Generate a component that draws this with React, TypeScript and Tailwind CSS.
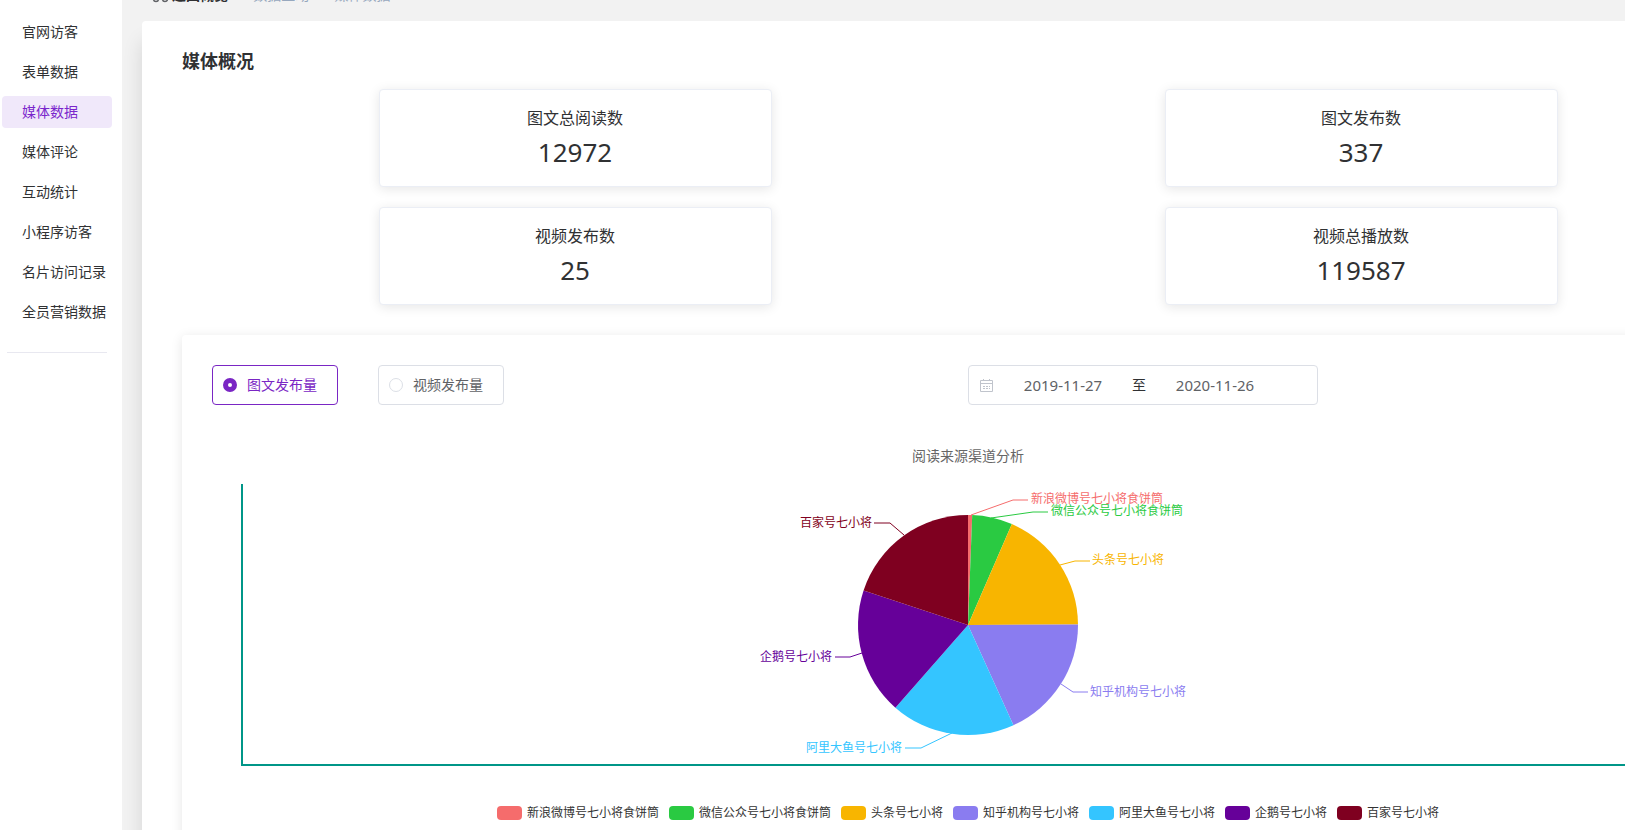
import { useState } from "react";

const menu = [
  "官网访客",
  "表单数据",
  "媒体数据",
  "媒体评论",
  "互动统计",
  "小程序访客",
  "名片访问记录",
  "全员营销数据",
];

const stats = [
  { label: "图文总阅读数", value: "12972" },
  { label: "图文发布数", value: "337" },
  { label: "视频发布数", value: "25" },
  { label: "视频总播放数", value: "119587" },
];

// from / to are degrees, clockwise from the top
const slices = [
  { name: "新浪微博号七小将食饼筒", color: "#f56c6c", from: 0, to: 2.2, line: "253,31 295,16 310,16", x: 313, y: 14 },
  { name: "微信公众号七小将食饼筒", color: "#2aca42", from: 2.2, to: 23.5, line: "273,34 315,28 330,28", x: 333, y: 26 },
  { name: "头条号七小将", color: "#f8b500", from: 23.5, to: 89.7, line: "342,81 357,77 372,77", x: 374, y: 75 },
  { name: "知乎机构号七小将", color: "#8a7cf0", from: 89.7, to: 155.6, line: "343,200 355,208 370,208", x: 372, y: 207 },
  { name: "阿里大鱼号七小将", color: "#34c5ff", from: 155.6, to: 221.3, line: "234,249 203,264 187,264", x: 184, y: 263 },
  { name: "企鹅号七小将", color: "#660099", from: 221.3, to: 288.3, line: "144,169 132,173 117,173", x: 114, y: 172 },
  { name: "百家号七小将", color: "#7f0020", from: 288.3, to: 360, line: "186,51 172,39 156,39", x: 154, y: 38 },
];

const CX = 250;
const CY = 141;
const R = 110;

function arc(from: number, to: number) {
  const point = (deg: number) => {
    const a = (deg * Math.PI) / 180;
    return `${CX + R * Math.sin(a)} ${CY - R * Math.cos(a)}`;
  };
  return `M${CX} ${CY} L${point(from)} A${R} ${R} 0 0 1 ${point(to)} Z`;
}

function Sidebar() {
  return (
    <nav className="w-[122px] shrink-0 bg-white pt-4">
      <ul className="flex flex-col gap-2 pr-[10px] pl-[2px]">
        {menu.map((item) => (
          <li key={item}>
            <a
              href="#"
              className={`block h-8 rounded pl-5 text-sm leading-8 whitespace-nowrap ${
                item === "媒体数据" ? "bg-[#f0e8fa] text-[#7a26cc]" : "text-[#303133]"
              }`}
            >
              {item}
            </a>
          </li>
        ))}
      </ul>
      <hr className="mt-6 mr-[15px] ml-[7px] border-[#e8e8f0]" />
    </nav>
  );
}

function Breadcrumb() {
  return (
    <div className="flex h-5 items-center pl-[10px] text-sm leading-5 whitespace-nowrap text-[#97a8be]">
      <svg className="mr-1 h-4 w-4" viewBox="0 0 16 16" fill="none" stroke="#606266" strokeWidth="1.5">
        <circle cx="4" cy="12" r="2.5" />
        <circle cx="13" cy="12" r="2.5" />
        <path d="M5 10 11 2M12 10 6 2" />
      </svg>
      <a href="#" className="font-bold text-[#303133]">
        返回概览
      </a>
      <span className="mx-[10px]">/</span>
      <span>数据互动</span>
      <span className="mx-[10px]">/</span>
      <span>媒体数据</span>
    </div>
  );
}

function StatCard({ label, value }: { label: string; value: string }) {
  return (
    <div className="w-1/2 rounded border border-[#ebeef5] bg-white py-4 text-center text-[#303133] shadow-[0_2px_12px_rgba(0,0,0,0.1)]">
      <div className="text-base leading-6">{label}</div>
      <div className="mt-1 text-[26px] leading-9">{value}</div>
    </div>
  );
}

function RadioBox({ label, checked, onChange }: { label: string; checked: boolean; onChange: () => void }) {
  return (
    <label
      className={`flex h-10 items-center gap-[10px] rounded border pr-5 pl-[10px] text-sm ${
        checked ? "border-[#7a26c4] text-[#7a26c4]" : "border-[#dcdfe6] text-[#606266]"
      }`}
    >
      <input
        type="radio"
        name="metric"
        checked={checked}
        onChange={onChange}
        className="h-[14px] w-[14px] appearance-none rounded-full border border-[#dcdfe6] bg-white checked:border-[5px] checked:border-[#7a26c4]"
      />
      {label}
    </label>
  );
}

function CalendarIcon() {
  return (
    <svg className="h-[14px] w-[14px] shrink-0" viewBox="0 0 14 14" fill="none" stroke="#c0c4cc">
      <path d="M1.5 2.5h12v11h-12zM1.5 5.5h12M4.5 1v2M10.5 1v2" />
      <path d="M4 8.5h7M4 10.5h7" strokeDasharray="2 1" />
    </svg>
  );
}

function DateRange() {
  return (
    <div className="flex h-10 w-[350px] items-center rounded border border-[#dcdfe6] bg-white px-[10px]">
      <CalendarIcon />
      <input
        type="text"
        aria-label="开始日期"
        defaultValue="2019-11-27"
        className="ml-[10px] w-[120px] text-center text-[15px] text-[#606266] outline-none"
      />
      <span className="w-8 text-center text-sm text-[#303133]">至</span>
      <input
        type="text"
        aria-label="结束日期"
        defaultValue="2020-11-26"
        className="w-[120px] text-center text-[15px] text-[#606266] outline-none"
      />
    </div>
  );
}

function PieChart() {
  return (
    <div className="mr-[31px] ml-[29px] flex justify-center border-b-2 border-l-2 border-[#009688]">
      <svg className="h-[280px] w-[500px]" viewBox="0 0 500 280">
        {slices.map((s) => (
          <path key={s.name} d={arc(s.from, s.to)} fill={s.color} />
        ))}
        {slices.map((s) => (
          <g key={s.name}>
            <polyline points={s.line} fill="none" stroke={s.color} />
            <text
              x={s.x}
              y={s.y}
              fill={s.color}
              fontSize="12"
              textAnchor={s.x < CX ? "end" : "start"}
              dominantBaseline="central"
            >
              {s.name}
            </text>
          </g>
        ))}
      </svg>
    </div>
  );
}

function Legend() {
  return (
    <ul className="mt-[38px] flex justify-center gap-[10px]">
      {slices.map((s) => (
        <li key={s.name} className="flex items-center gap-[5px] text-xs leading-[18px] whitespace-nowrap text-[#333]">
          <span className="h-[14px] w-[25px] rounded" style={{ backgroundColor: s.color }} />
          {s.name}
        </li>
      ))}
    </ul>
  );
}

export default function App() {
  const [metric, setMetric] = useState("图文发布量");

  return (
    <div className="flex h-screen overflow-hidden bg-[#f2f2f2] font-['Noto_Sans','Noto_Sans_CJK_SC',sans-serif]">
      <Sidebar />
      {/* the content runs on past the right edge of the window */}
      <main className="-mt-[15px] -mr-[189px] flex-1 px-5">
        <Breadcrumb />
        <section className="mt-4 min-h-screen rounded bg-white px-10 pt-[26px] pb-10 shadow-[0_20px_20px_rgba(0,0,0,0.12)]">
          <h2 className="text-lg leading-7 font-bold text-[#303133]">媒体概况</h2>
          <div className="mt-[14px] grid grid-cols-2 gap-y-5">
            {stats.map((s) => (
              <div key={s.label} className="flex justify-center">
                <StatCard label={s.label} value={s.value} />
              </div>
            ))}
          </div>

          <div className="mt-[30px] rounded bg-white p-[30px] shadow-[0_2px_12px_rgba(0,0,0,0.1)]">
            <div className="grid grid-cols-2">
              <div className="flex gap-10">
                {["图文发布量", "视频发布量"].map((m) => (
                  <RadioBox key={m} label={m} checked={metric === m} onChange={() => setMetric(m)} />
                ))}
              </div>
              <DateRange />
            </div>
            <h3 className="mt-10 mb-[18px] text-center text-sm leading-[21px] text-[#666]">阅读来源渠道分析</h3>
            <PieChart />
            <Legend />
          </div>
        </section>
      </main>
    </div>
  );
}
